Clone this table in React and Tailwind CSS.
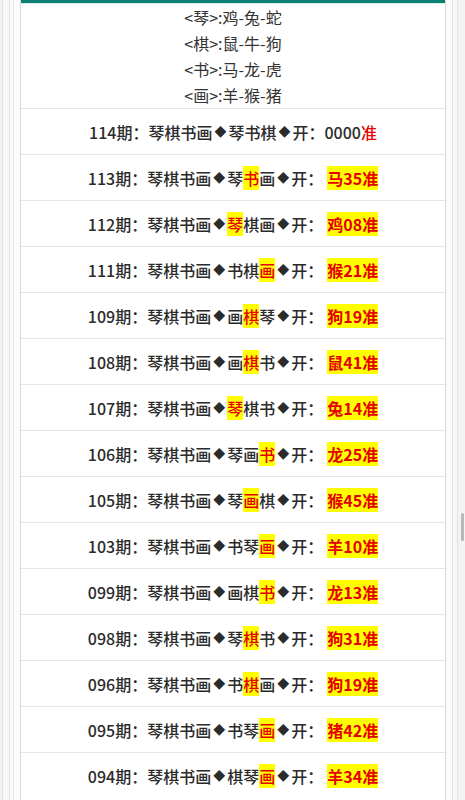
import React from "react";

const header = [
    ["琴", "鸡-兔-蛇"],
    ["棋", "鼠-牛-狗"],
    ["书", "马-龙-虎"],
    ["画", "羊-猴-猪"],
];

// pick: three chars, hit = index of highlighted char (-1 = none)
const rows = [
    { no: "114", pick: "琴书棋", hit: -1, res: "0000" },
    { no: "113", pick: "琴书画", hit: 1, res: "马35" },
    { no: "112", pick: "琴棋画", hit: 0, res: "鸡08" },
    { no: "111", pick: "书棋画", hit: 2, res: "猴21" },
    { no: "109", pick: "画棋琴", hit: 1, res: "狗19" },
    { no: "108", pick: "画棋书", hit: 1, res: "鼠41" },
    { no: "107", pick: "琴棋书", hit: 0, res: "兔14" },
    { no: "106", pick: "琴画书", hit: 2, res: "龙25" },
    { no: "105", pick: "琴画棋", hit: 1, res: "猴45" },
    { no: "103", pick: "书琴画", hit: 2, res: "羊10" },
    { no: "099", pick: "画棋书", hit: 2, res: "龙13" },
    { no: "098", pick: "琴棋书", hit: 1, res: "狗31" },
    { no: "096", pick: "书棋画", hit: 1, res: "狗19" },
    { no: "095", pick: "书琴画", hit: 2, res: "猪42" },
    { no: "094", pick: "棋琴画", hit: 2, res: "羊34" },
];

const Diamond = () => (
    <span className="inline-block w-[16px] text-center text-[12px]">◆</span>
);

function Row({ row }) {
    return (
        <div className="h-[46px] flex items-center justify-center border-t border-[#e6e6e6] text-[16px] font-medium text-[#2b2b2b] whitespace-nowrap">
            <span>{row.no}期：琴棋书画</span>
            <Diamond />
            {row.pick.split("").map((c, i) =>
                i === row.hit ? (
                    <span key={i} className="bg-[#ffff00] text-[#e60000]">{c}</span>
                ) : (
                    <span key={i}>{c}</span>
                )
            )}
            <Diamond />
            <span>开：</span>
            {row.hit === -1 ? (
                <span>
                    {row.res}
                    <span className="text-[#e60000]">准</span>
                </span>
            ) : (
                <span className="ml-[4px] bg-[#ffff00] text-[#e60000] font-bold">{row.res}准</span>
            )}
        </div>
    );
}

export default function App() {
    return (
        <div
            className="relative min-h-screen bg-[#f3f3f3] flex"
            style={{ fontFamily: '"Noto Sans CJK SC", "Noto Sans", sans-serif' }}
        >
            {/* left gutter stripes */}
            <div className="w-[21px] flex">
                <div className="w-[2px]" />
                <div className="w-[1px] bg-[#e2e2e2]" />
                <div className="w-[6px] bg-[#f7f7f7]" />
                <div className="w-[1px] bg-[#e4e4e4]" />
                <div className="w-[3px] bg-[#fafafa]" />
                <div className="w-[1px] bg-[#e4e4e4]" />
                <div className="w-[6px] bg-[#fbfbfb]" />
                <div className="w-[1px] bg-[#dcdcdc]" />
            </div>

            {/* content */}
            <div className="w-[424px] bg-white">
                <div className="h-[3px] bg-[#0b7f73]" />
                <div className="h-[1px] bg-[#d8efef]" />
                <div className="text-[16px] text-[#333] text-center">
                    {header.map(([k, v]) => (
                        <div key={k} className="h-[26px] leading-[26px]">
                            &lt;{k}&gt;:{v}
                        </div>
                    ))}
                </div>
                {rows.map((r) => (
                    <Row key={r.no} row={r} />
                ))}
            </div>

            {/* right gutter stripes */}
            <div className="flex-1 flex">
                <div className="w-[1px] bg-[#dcdcdc]" />
                <div className="w-[6px] bg-[#fbfbfb]" />
                <div className="w-[1px] bg-[#e4e4e4]" />
                <div className="w-[4px] bg-[#f6f6f6]" />
                <div className="w-[1px] bg-[#e4e4e4]" />
                <div className="flex-1 bg-[#f3f3f3]" />
            </div>

            {/* scrollbar thumb */}
            <div className="absolute right-[1px] top-[513px] w-[3px] h-[28px] bg-[#b8b8b8] rounded-sm" />
        </div>
    );
}
